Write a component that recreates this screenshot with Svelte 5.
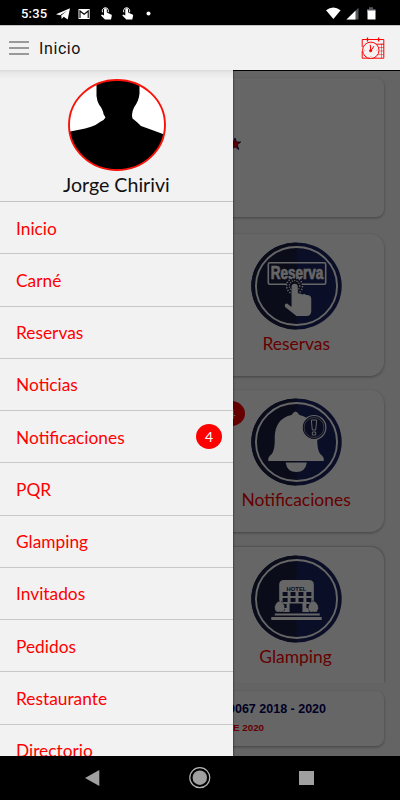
<script>
  // Home screen with the side menu open
  let user = 'Jorge Chirivi';
  let current = 'Inicio';
  let menuOpen = true;

  const menuItems = [
    { label: 'Inicio' },
    { label: 'Carné' },
    { label: 'Reservas' },
    { label: 'Noticias' },
    { label: 'Notificaciones', count: 4 },
    { label: 'PQR' },
    { label: 'Glamping' },
    { label: 'Invitados' },
    { label: 'Pedidos' },
    { label: 'Restaurante' },
    { label: 'Directorio' }
  ];

  const tiles = [
    { label: 'Reservas', icon: 'reserva' },
    { label: 'Notificaciones', icon: 'bell' },
    { label: 'Glamping', icon: 'hotel' }
  ];
</script>

<div class="screen">
  <div class="status-bar">
    <span class="time">5:35</span>
    <svg class="status-left" width="100" height="14" viewBox="0 0 100 14" fill="#fff">
      <path d="M0 7.2 14 1.3 11.7 12.6 7.7 9.8 5.7 12 5.2 8.6 11 3.8 4 8.3Z" />
      <path d="M22.5 2h11.2v10H22.5Z" />
      <path d="M24 11V4l4.1 3.3L32.2 4v7" fill="none" stroke="#000" stroke-width="1.1" />
      <g id="touch">
        <path d="M49 12.6 45 8.600l.9-1 2.100.9V2.600a1.400 1.400 0 0 1 2.800 0v3l4.300 1.800c.6.300.8.700.7 1.300l-.8 3.900Z" />
        <path d="M46.600 5.300a3.100 3.100 0 1 1 5.500 0" fill="none" stroke="#fff" stroke-width="1" />
      </g>
      <use href="#touch" x="21.300" />
      <circle cx="92.500" cy="6.500" r="2" />
    </svg>
    <svg class="status-right" width="50" height="14" viewBox="0 0 50 14" fill="#fff">
      <path d="M0 3.200Q7.300-2 14.600 3.200L7.400 12Z" />
      <path d="M20.500 12.400 32.500.800v11.600Z" fill="#55585c" />
      <path d="M20.500 12.400 29.500 3.700v8.700Z" />
      <path d="M41 2h2V.200h4V2h2.500v3H41Z" fill="#55585c" />
      <path d="M41.500 3.500h8v9h-8Z" />
    </svg>
  </div>

  <header>
    <button class="menu-button" aria-label="Menú" onclick={() => (menuOpen = !menuOpen)}>
      <span></span>
      <span></span>
      <span></span>
    </button>
    <h1>{current}</h1>
    <svg class="calendar" width="24" height="23" viewBox="0 0 24 23" fill="none" stroke="#f00" stroke-width="1">
      <path d="M1.200 10V2.500h21.600v18.700H1.200V14" />
      <path d="M6.500.400v4.200M17.600.400v4.200" stroke-width="1.300" />
      <path d="M14 7.200h9" />
      <path d="M18 10.500h5M18.500 14h4.500M17 17.600h6M20.500 7v14" opacity=".5" />
      <circle cx="9.800" cy="13.300" r="8.200" fill="#f2f2f2" />
      <path d="M9.800 14 9.300 8M9.800 14l3.200-5" />
      <circle cx="9.600" cy="13.700" r="1.100" fill="#f00" />
      <path d="M9.800 6.500v1M3.200 13.300h1M15.400 13.300h1M9.800 19v1" opacity=".4" />
    </svg>
  </header>

  <div class="body">
    <main>
      <section class="card banner">
        <svg width="12" height="12" viewBox="0 0 12 12">
          <path d="M6 0 7.500 4h4.200L8.400 6.800l1.300 4.700L6 8.800 2.300 11.500l1.300-4.700L.3 4h4.200Z" fill="#f00000" stroke="#00004a" stroke-width=".8" />
        </svg>
      </section>

      {#each tiles as tile}
        <section class="card tile {tile.icon}">
          {#if tile.icon === 'bell'}
            <span class="tile-count">4</span>
          {/if}
          <svg width="91" height="88" viewBox="0 0 92 88" preserveAspectRatio="none">
            <ellipse cx="46" cy="44" rx="45.700" ry="43.500" fill="#1c2562" />
            <path d="M46 .500A45.700 43.500 0 0 0 46 87.500Z" fill="#191e42" />
            <ellipse cx="46" cy="44" rx="41" ry="39" fill="none" stroke="#fff" stroke-width="1.900" />
            {#if tile.icon === 'reserva'}
              <rect x="17.500" y="20.800" width="58" height="21.500" rx="1.500" fill="none" stroke="#fff" stroke-width="1.600" />
              <text x="46.500" y="36.700" text-anchor="middle" textLength="53" lengthAdjust="spacingAndGlyphs" class="sign">Reserva</text>
              <circle cx="44" cy="44" r="8" fill="#191e42" stroke="#fff" stroke-width="1.500" stroke-dasharray="1.300 1.500" />
              <circle cx="44" cy="44" r="5.300" fill="none" stroke="#fff" stroke-width="1.200" stroke-dasharray="1.200 1.200" />
              <path d="M41 65V45a3.100 3.100 0 0 1 6.300 0v7q2.500-1.200 4.300.500 2.500-1.200 4.300.500 5-.2 5 3.800V69q0 5-5 5H46L34.500 65q-1.300-3.500 2-3.500Z" fill="#fff" />
            {:else if tile.icon === 'bell'}
              <path d="M41 17Q45 10 49 17 66 21 67 39q-.5 14 3.500 17.500 4 3 3 6.500H17.500q-1-3.500 3-6.500 4-4 3.500-17.500.5-18.500 17-22Z" fill="#fff" />
              <path d="M35 64.500h21.500Q55 74 45.800 74 36.500 74 35 64.500Z" fill="#fff" />
              <circle cx="63.700" cy="29.500" r="12" fill="#1a2050" stroke="#fff" stroke-width="1.200" />
              <circle cx="63.700" cy="29.500" r="10" fill="none" stroke="#fff" stroke-width=".5" />
              <path d="M61 22h5.400l-1 10H62ZM62 34h3.400v3H62Z" fill="none" stroke="#fff" stroke-width="1" />
            {:else}
              <path d="M28.500 57V30q0-5 5-5h25q5 0 5 5v27Z" fill="#fff" />
              <text x="46" y="36" text-anchor="middle" textLength="20" lengthAdjust="spacingAndGlyphs" class="hotel-sign">HOTEL</text>
              <path d="M32 37h5v4h-5zM40 37h5v4h-5zM48 37h5v4h-5zM56 37h5v4h-5zM32 43h5v4h-5zM40 43h5v4h-5zM48 43h5v4h-5zM56 43h5v4h-5zM32 49h4v4h-4zM56 49h4v4h-4zM39 48.500h13v9H39z" fill="#1a2050" />
              <path d="M25.500 57q-3-4-.5-8 4-6 8 0 2.500 4-.5 8ZM59.500 57q-3-4-.5-8 4-6 8 0 2.500 4-.5 8Z" fill="#fff" stroke="#1a2050" stroke-width=".7" stroke-dasharray="2 1" />
              <path d="M24 58.500h45.500v2H24zM20.500 62h51v3h-51z" fill="#fff" />
            {/if}
          </svg>
          <p>{tile.label}</p>
        </section>
      {/each}

      <section class="card notice">
        <strong>0067 2018 - 2020</strong>
        <small>E 2020</small>
      </section>
    </main>

    {#if menuOpen}
      <div class="backdrop"></div>
      <aside>
        <div class="profile">
          <svg width="98" height="92" viewBox="0 0 98 92">
            <defs>
              <clipPath id="avatar"><ellipse cx="49" cy="46" rx="48" ry="45" /></clipPath>
            </defs>
            <g clip-path="url(#avatar)">
              <rect width="98" height="92" fill="#fff" />
              <path d="M28.500 0V17q.5 5 2.500 8.500 4 5 4.500 9.500l2 3.500-2 2.500q-4 2-8 5Q20 49.500 0 53V92H98V56Q84 51 73 47 68 42 64.500 39.500q-1.500-5 1.500-11 5-7 5.500-14V0Z" />
            </g>
            <ellipse cx="49" cy="46" rx="48" ry="45" fill="none" stroke="#f81208" stroke-width="1.900" />
          </svg>
          <p>{user}</p>
        </div>
        <nav>
          {#each menuItems as item}
            <div class="menu-item">
              <span class="label">{item.label}</span>
              {#if item.count}
                <span class="count">{item.count}</span>
              {/if}
            </div>
          {/each}
        </nav>
      </aside>
    {/if}
  </div>

  <footer>
    <svg width="400" height="44" viewBox="0 0 400 44" fill="#a0a0a0">
      <path d="M85 22 99.300 14v16Z" />
      <circle cx="199.800" cy="21.700" r="7.200" />
      <circle cx="199.800" cy="21.700" r="10" fill="none" stroke="#b4b4b4" stroke-width="1.200" />
      <rect x="299" y="15" width="15" height="14" />
    </svg>
  </footer>
</div>

<style>
  :global(body) {
    margin: 0;
    background: #000;
  }

  .screen {
    display: flex;
    flex-direction: column;
    width: 400px;
    height: 800px;
    overflow: hidden;
    font-family: Lato, 'Liberation Sans', sans-serif;
  }

  p, h1 {
    margin: 0;
    font-weight: normal;
  }

  .status-bar {
    display: flex;
    align-items: center;
    box-sizing: border-box;
    height: 25px;
    padding: 2px 24px 0 21px;
    background: #000;
  }

  .time {
    width: 35px;
    color: #fff;
    font: 500 13px Roboto, sans-serif;
    letter-spacing: 0.2px;
  }

  .status-right {
    margin-left: auto;
  }

  header {
    display: flex;
    align-items: center;
    box-sizing: border-box;
    height: 45px;
    padding: 0 15px 0 9px;
    background: #f2f2f2;
    border-top: 1px solid #c4c4c4;
  }

  .menu-button {
    display: flex;
    flex-direction: column;
    gap: 3.5px;
    width: 20px;
    padding: 0;
    border: 0;
    background: none;
  }

  .menu-button span {
    height: 2.5px;
    background: #999;
  }

  h1 {
    margin-left: 10px;
    font: 16px Roboto, sans-serif;
    letter-spacing: 0.6px;
    color: #111;
  }

  .calendar {
    margin-left: auto;
  }

  .body {
    position: relative;
    flex: 1;
    overflow: hidden;
    background: #fafafa;
  }

  main {
    display: flex;
    flex-direction: column;
    align-items: flex-end;
    padding: 8px 16px 0;
  }

  .card {
    box-sizing: border-box;
    flex: none;
    background: #fff;
    border-radius: 8px;
    box-shadow: 0 1px 3px rgba(0, 0, 0, 0.35);
  }

  .banner {
    display: flex;
    align-items: center;
    width: 368px;
    height: 139px;
    margin-bottom: 17px;
    padding: 0 143px 7px 0;
    justify-content: flex-end;
  }

  .tile {
    position: relative;
    display: flex;
    flex-direction: column;
    align-items: center;
    width: 176px;
    height: 142px;
    margin-bottom: 14px;
    padding-top: 8px;
    border-radius: 14px;
  }

  .tile p {
    margin-top: 3px;
    color: #f00;
    font-size: 16.6px;
    line-height: 23px;
    transform: scaleX(1.05);
  }

  .bell {
    margin-bottom: 15px;
  }

  .hotel {
    height: 136px;
    margin-bottom: 8px;
    border-radius: 14px 14px 0 0;
    box-shadow: 1px -1px 2px rgba(0, 0, 0, 0.2);
  }

  .tile-count {
    position: absolute;
    top: 11px;
    left: 10px;
    width: 27px;
    height: 25px;
    border-radius: 50%;
    background: #f00;
    color: #fff;
    font-size: 14px;
    line-height: 25px;
    text-align: center;
  }

  .sign {
    fill: #fff;
    stroke: #fff;
    stroke-width: 0.7px;
    font: bold 18px 'Liberation Sans', sans-serif;
  }

  .hotel-sign {
    fill: #1a2050;
    font: bold 6px 'Liberation Sans', sans-serif;
  }

  .notice {
    display: flex;
    flex-direction: column;
    width: 368px;
    height: 55px;
    padding: 10px 0 0 212px;
    font-family: 'Liberation Sans', sans-serif;
  }

  .notice strong {
    color: #00005a;
    font-size: 12.5px;
    line-height: 17px;
  }

  .notice small {
    margin: 4px 0 0 5px;
    color: #f00;
    font-size: 9.8px;
    font-weight: bold;
    line-height: 12px;
  }

  .backdrop {
    position: absolute;
    inset: 0;
    border-top: 1px solid #000;
    background: rgba(0, 0, 0, 0.6);
  }

  aside {
    position: absolute;
    top: 0;
    left: 0;
    width: 233px;
    height: 100%;
    overflow: hidden;
    background: linear-gradient(#d9d9d9, #e6e6e6 2px, #f2f2f2 9px);
    box-shadow: 0 0 2px rgba(0, 0, 0, 0.8);
  }

  .profile {
    display: flex;
    flex-direction: column;
    align-items: center;
    box-sizing: border-box;
    height: 132px;
    padding-top: 9px;
    border-bottom: 1px solid #c4c4c4;
  }

  .profile svg {
    flex: none;
  }

  .profile p {
    margin-top: 2px;
    color: #111;
    font-size: 18.5px;
    line-height: 24px;
    transform: scaleX(1.06);
  }

  .menu-item {
    display: flex;
    align-items: center;
    justify-content: space-between;
    box-sizing: border-box;
    height: 52.25px;
    padding: 0 11px 0 15.5px;
    border-bottom: 1px solid #c8c8c8;
  }

  .label {
    padding-top: 2px;
    color: #f00;
    font-size: 16.5px;
    transform: scaleX(1.05);
    transform-origin: left;
  }

  .count {
    width: 26px;
    height: 25px;
    border-radius: 50%;
    background: #f00;
    color: #fff;
    font-size: 14px;
    line-height: 26px;
    text-align: center;
  }

  footer {
    height: 44px;
    background: #000;
  }
</style>
